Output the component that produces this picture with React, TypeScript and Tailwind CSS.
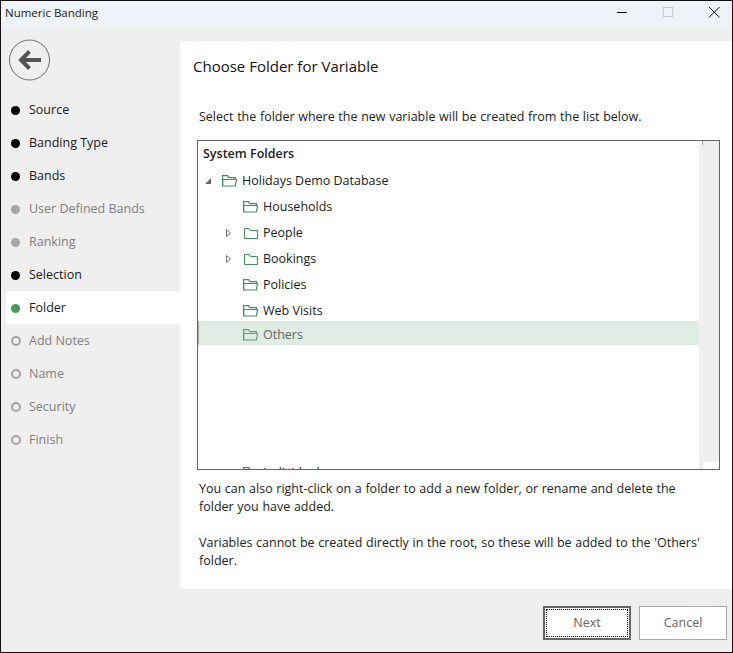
import React from "react";

const steps = [
  { label: "Source", state: "done" },
  { label: "Banding Type", state: "done" },
  { label: "Bands", state: "done" },
  { label: "User Defined Bands", state: "skipped" },
  { label: "Ranking", state: "skipped" },
  { label: "Selection", state: "done" },
  { label: "Folder", state: "current" },
  { label: "Add Notes", state: "todo" },
  { label: "Name", state: "todo" },
  { label: "Security", state: "todo" },
  { label: "Finish", state: "todo" },
];

function StepDot({ state }: { state: string }) {
  if (state === "done") return <span className="h-[9px] w-[9px] rounded-full bg-black" />;
  if (state === "current") return <span className="h-[9px] w-[9px] rounded-full bg-[#4a9a5c]" />;
  if (state === "skipped") return <span className="h-[9px] w-[9px] rounded-full bg-[#a6a6a6]" />;
  return <span className="-mx-[0.5px] h-[10px] w-[10px] rounded-full border-2 border-[#a3a3a3]" />;
}

// dossier ouvert
function FolderOpen() {
  return (
    <svg width="15" height="12" viewBox="0 0 15 12" fill="none" stroke="#3f9155" strokeWidth="1.2" className="shrink-0">
      <path d="M0.6 11V0.6H5.5L7 2.6H13.4V4.5" />
      <path d="M0.6 4.5H14.5L13.4 11H0.6Z" />
    </svg>
  );
}

function FolderClosed() {
  return (
    <svg width="14" height="11" viewBox="0 0 14 11" fill="none" stroke="#3f9155" strokeWidth="1" className="shrink-0">
      <path d="M0.5 10.5V0.5H5L6.5 2.5H13.5V10.5Z" />
    </svg>
  );
}

function TreeRow({ label, children }: { label: string; children: React.ReactNode }) {
  return (
    <div className="flex h-[26px] items-center pl-[45px]">
      <span className="flex w-[20px] shrink-0">{children}</span>
      <span className="text-[#1a1a1a]">{label}</span>
    </div>
  );
}

export default function App() {
  return (
    <div
      className="flex h-[653px] w-[733px] flex-col border border-[#111] bg-[#efefef] text-[12.5px] text-[#111]"
      style={{ fontFamily: '"Open Sans", "Noto Sans", sans-serif' }}
    >
      {/* Barre de titre */}
      <div className="flex h-[26px] shrink-0 items-center justify-between bg-[#eef3f8] pl-[4px]">
        <span className="pb-[2px] text-[11.5px] text-[#222]">Numeric Banding</span>
        <div className="flex items-center">
          <svg width="46" height="26" viewBox="0 0 46 26" stroke="#111" fill="none">
            <path d="M23 11.5H33" />
          </svg>
          <svg width="46" height="26" viewBox="0 0 46 26" stroke="#c8c8c8" fill="none">
            <rect x="23.5" y="6.5" width="9" height="9" />
          </svg>
          <svg width="46" height="26" viewBox="0 0 46 26" stroke="#111" fill="none">
            <path d="M23 6L33.5 16.5M33.5 6L23 16.5" />
          </svg>
        </div>
      </div>

      <div className="flex min-h-0 flex-1">
        {/* Étapes */}
        <aside className="w-[179px] shrink-0 pl-[5px] pt-[12px]">
          <svg width="42" height="42" viewBox="0 0 42 42" fill="none" className="ml-[3px]">
            <circle cx="20.5" cy="21" r="20" stroke="#6e6e6e" strokeWidth="1" />
            <path d="M13 21H32" stroke="#555" strokeWidth="4" />
            <path d="M20.5 12.5L12 21L20.5 29.5" stroke="#555" strokeWidth="4" />
          </svg>
          <nav className="mt-[12px]">
            {steps.map((s) => (
              <div
                key={s.label}
                className={`flex h-[33px] items-center gap-[9px] pl-[5px] pt-[1px] ${s.state === "current" ? "bg-white" : ""}`}
              >
                <StepDot state={s.state} />
                <span className={s.state === "done" || s.state === "current" ? "text-[#1a1a1a]" : "text-[#808080]"}>
                  {s.label}
                </span>
              </div>
            ))}
          </nav>
        </aside>

        {/* Contenu */}
        <div className="flex min-w-0 flex-1 flex-col">
          <main className="mt-[14px] h-[548px] bg-white pl-[13px] pr-[12px]">
            <h1 className="pt-[14px] text-[15px] leading-[22px] text-[#111]">Choose Folder for Variable</h1>
            <p className="ml-[6px] mt-[31px] leading-[18px] text-[#222] [word-spacing:0.4px]">
              Select the folder where the new variable will be created from the list below.
            </p>
            <div className="ml-[4px] mt-[14px] flex h-[330px] w-[523px] overflow-hidden border border-[#666]">
              <div className="min-w-0 flex-1 overflow-hidden">
                <div className="flex h-[27px] items-center pl-[5px] font-semibold text-[#222]">System Folders</div>
                <div className="flex h-[26px] items-center pl-[7px]">
                  <svg width="6" height="6" viewBox="0 0 6 6" className="mr-[11px] shrink-0">
                    <path d="M6 0V6H0Z" fill="#666" />
                  </svg>
                  <FolderOpen />
                  <span className="ml-[5px] text-[#1a1a1a]">Holidays Demo Database</span>
                </div>
                <TreeRow label="Households"><FolderOpen /></TreeRow>
                {["People", "Bookings"].map((name) => (
                  <div key={name} className="flex h-[26px] items-center pl-[28px]">
                    <svg width="5" height="8" viewBox="0 0 5 8" fill="none" stroke="#777" className="mr-[13px] shrink-0">
                      <path d="M0.5 0.5L4.5 4L0.5 7.5Z" />
                    </svg>
                    <span className="flex w-[19px] shrink-0"><FolderClosed /></span>
                    <span className="text-[#1a1a1a]">{name}</span>
                  </div>
                ))}
                <TreeRow label="Policies"><FolderOpen /></TreeRow>
                <TreeRow label="Web Visits"><FolderOpen /></TreeRow>
                <div className="-mt-[3px] flex h-[24px] items-center border-l border-[#aaa] bg-[#deece3] pl-[44px] pt-[4px]">
                  <span className="flex w-[20px] shrink-0 opacity-80"><FolderOpen /></span>
                  <span className="text-[#666]">Others</span>
                </div>
                <div className="mt-[115px]">
                  <TreeRow label="Individuals"><FolderOpen /></TreeRow>
                </div>
              </div>
              {/* Zone de défilement vide */}
              <div className="relative flex w-[20px] shrink-0">
                <span className="absolute left-[3px] top-0 h-[4px] w-px bg-[#999]" />
                <div className="mt-[4px] w-[4px] bg-[#efefef]" />
                <div className="mb-[7px] flex-1 bg-[#efefef]" />
              </div>
            </div>
            <p className="ml-[6px] mt-[10px] w-[507px] leading-[18px] text-[#222] [word-spacing:0.4px]">
              You can also right-click on a folder to add a new folder, or rename and delete the folder you have added.
            </p>
            <p className="ml-[6px] mt-[18px] w-[507px] leading-[18px] text-[#222] [word-spacing:0.4px]">
              Variables cannot be created directly in the root, so these will be added to the 'Others' folder.
            </p>
          </main>

          {/* Boutons */}
          <div className="flex flex-1 items-start justify-end gap-[8px] pr-[5px] pt-[17px]">
            <button className="h-[34px] w-[88px] border-2 border-[#666] bg-white p-[1px] text-[#666]">
              <span className="flex h-full w-full items-center justify-center border border-dotted border-black">Next</span>
            </button>
            <button className="h-[34px] w-[88px] border border-[#aaa] bg-white text-[#666]">Cancel</button>
          </div>
        </div>
      </div>
    </div>
  );
}
